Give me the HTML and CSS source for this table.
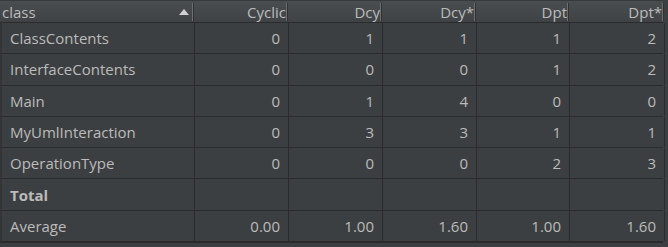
FILE: index.html
```html
<!DOCTYPE html>
<html>
<head>
<meta charset="utf-8">
<link rel="stylesheet" href="styles.css">
</head>
<body>
<div class="metrics">
  <div class="head">
    <div class="hcell name">class<span class="sort"></span></div>
    <div class="hcell">Cyclic</div>
    <div class="hcell">Dcy</div>
    <div class="hcell">Dcy*</div>
    <div class="hcell">Dpt</div>
    <div class="hcell">Dpt*</div>
  </div>
  <div class="row">
    <div class="cell name">ClassContents</div><div class="cell">0</div><div class="cell">1</div><div class="cell">1</div><div class="cell">1</div><div class="cell">2</div>
  </div>
  <div class="row">
    <div class="cell name">InterfaceContents</div><div class="cell">0</div><div class="cell">0</div><div class="cell">0</div><div class="cell">1</div><div class="cell">2</div>
  </div>
  <div class="row">
    <div class="cell name">Main</div><div class="cell">0</div><div class="cell">1</div><div class="cell">4</div><div class="cell">0</div><div class="cell">0</div>
  </div>
  <div class="row">
    <div class="cell name">MyUmlInteraction</div><div class="cell">0</div><div class="cell">3</div><div class="cell">3</div><div class="cell">1</div><div class="cell">1</div>
  </div>
  <div class="row">
    <div class="cell name">OperationType</div><div class="cell">0</div><div class="cell">0</div><div class="cell">0</div><div class="cell">2</div><div class="cell">3</div>
  </div>
  <div class="row">
    <div class="cell name total">Total</div><div class="cell"></div><div class="cell"></div><div class="cell"></div><div class="cell"></div><div class="cell"></div>
  </div>
  <div class="row last">
    <div class="cell name">Average</div><div class="cell">0.00</div><div class="cell">1.00</div><div class="cell">1.60</div><div class="cell">1.00</div><div class="cell">1.60</div>
  </div>
</div>
</body>
</html>
```

FILE: styles.css
```css
html, body {
  margin: 0;
  padding: 0;
  background: #3c3f41;
  height: 100%;
}

.metrics {
  width: 663px;
  font-family: "Open Sans", "Noto Sans", sans-serif;
  font-size: 15px;
  color: #bbbbbb;
}

.head, .row {
  display: grid;
  grid-template-columns: 193px 94px 94px 94px 93px 95px;
}

.head {
  background: linear-gradient(#4a4d4f, #404345);
  border-top: 1px solid #38393b;
  border-bottom: 1px solid #2b2b2b;
  box-sizing: border-box;
  height: 23px;
}

.hcell {
  position: relative;
  display: flex;
  align-items: center;
  justify-content: flex-end;
  padding-right: 1px;
  line-height: 20px;
  white-space: nowrap;
}

/* column divider in the header: a light rule with a dark shadow */
.hcell::after {
  content: "";
  position: absolute;
  right: 0;
  top: 2px;
  bottom: 1px;
  width: 1px;
  background: #6c6f71;
  box-shadow: 1px 0 0 #2f3133;
}

.hcell.name {
  justify-content: space-between;
  padding-left: 2px;
  padding-right: 4px;
}

.sort {
  width: 0;
  height: 0;
  border-left: 5px solid transparent;
  border-right: 5px solid transparent;
  border-bottom: 6px solid #d0d0d0;
}

.row {
  height: 31.3px;
  border-bottom: 1px solid #2b2b2b;
  border-left: 2px solid #333537;
  box-sizing: border-box;
}

.row.last {
  border-bottom: 2px solid #2b2b2b;
  height: 32.3px;
}

.cell {
  display: flex;
  align-items: center;
  justify-content: flex-end;
  padding-right: 8px;
  border-right: 1px solid #2b2b2b;
  white-space: nowrap;
}

.cell.name {
  justify-content: flex-start;
  padding-left: 8px;
}

.cell.total {
  font-weight: bold;
}
```
